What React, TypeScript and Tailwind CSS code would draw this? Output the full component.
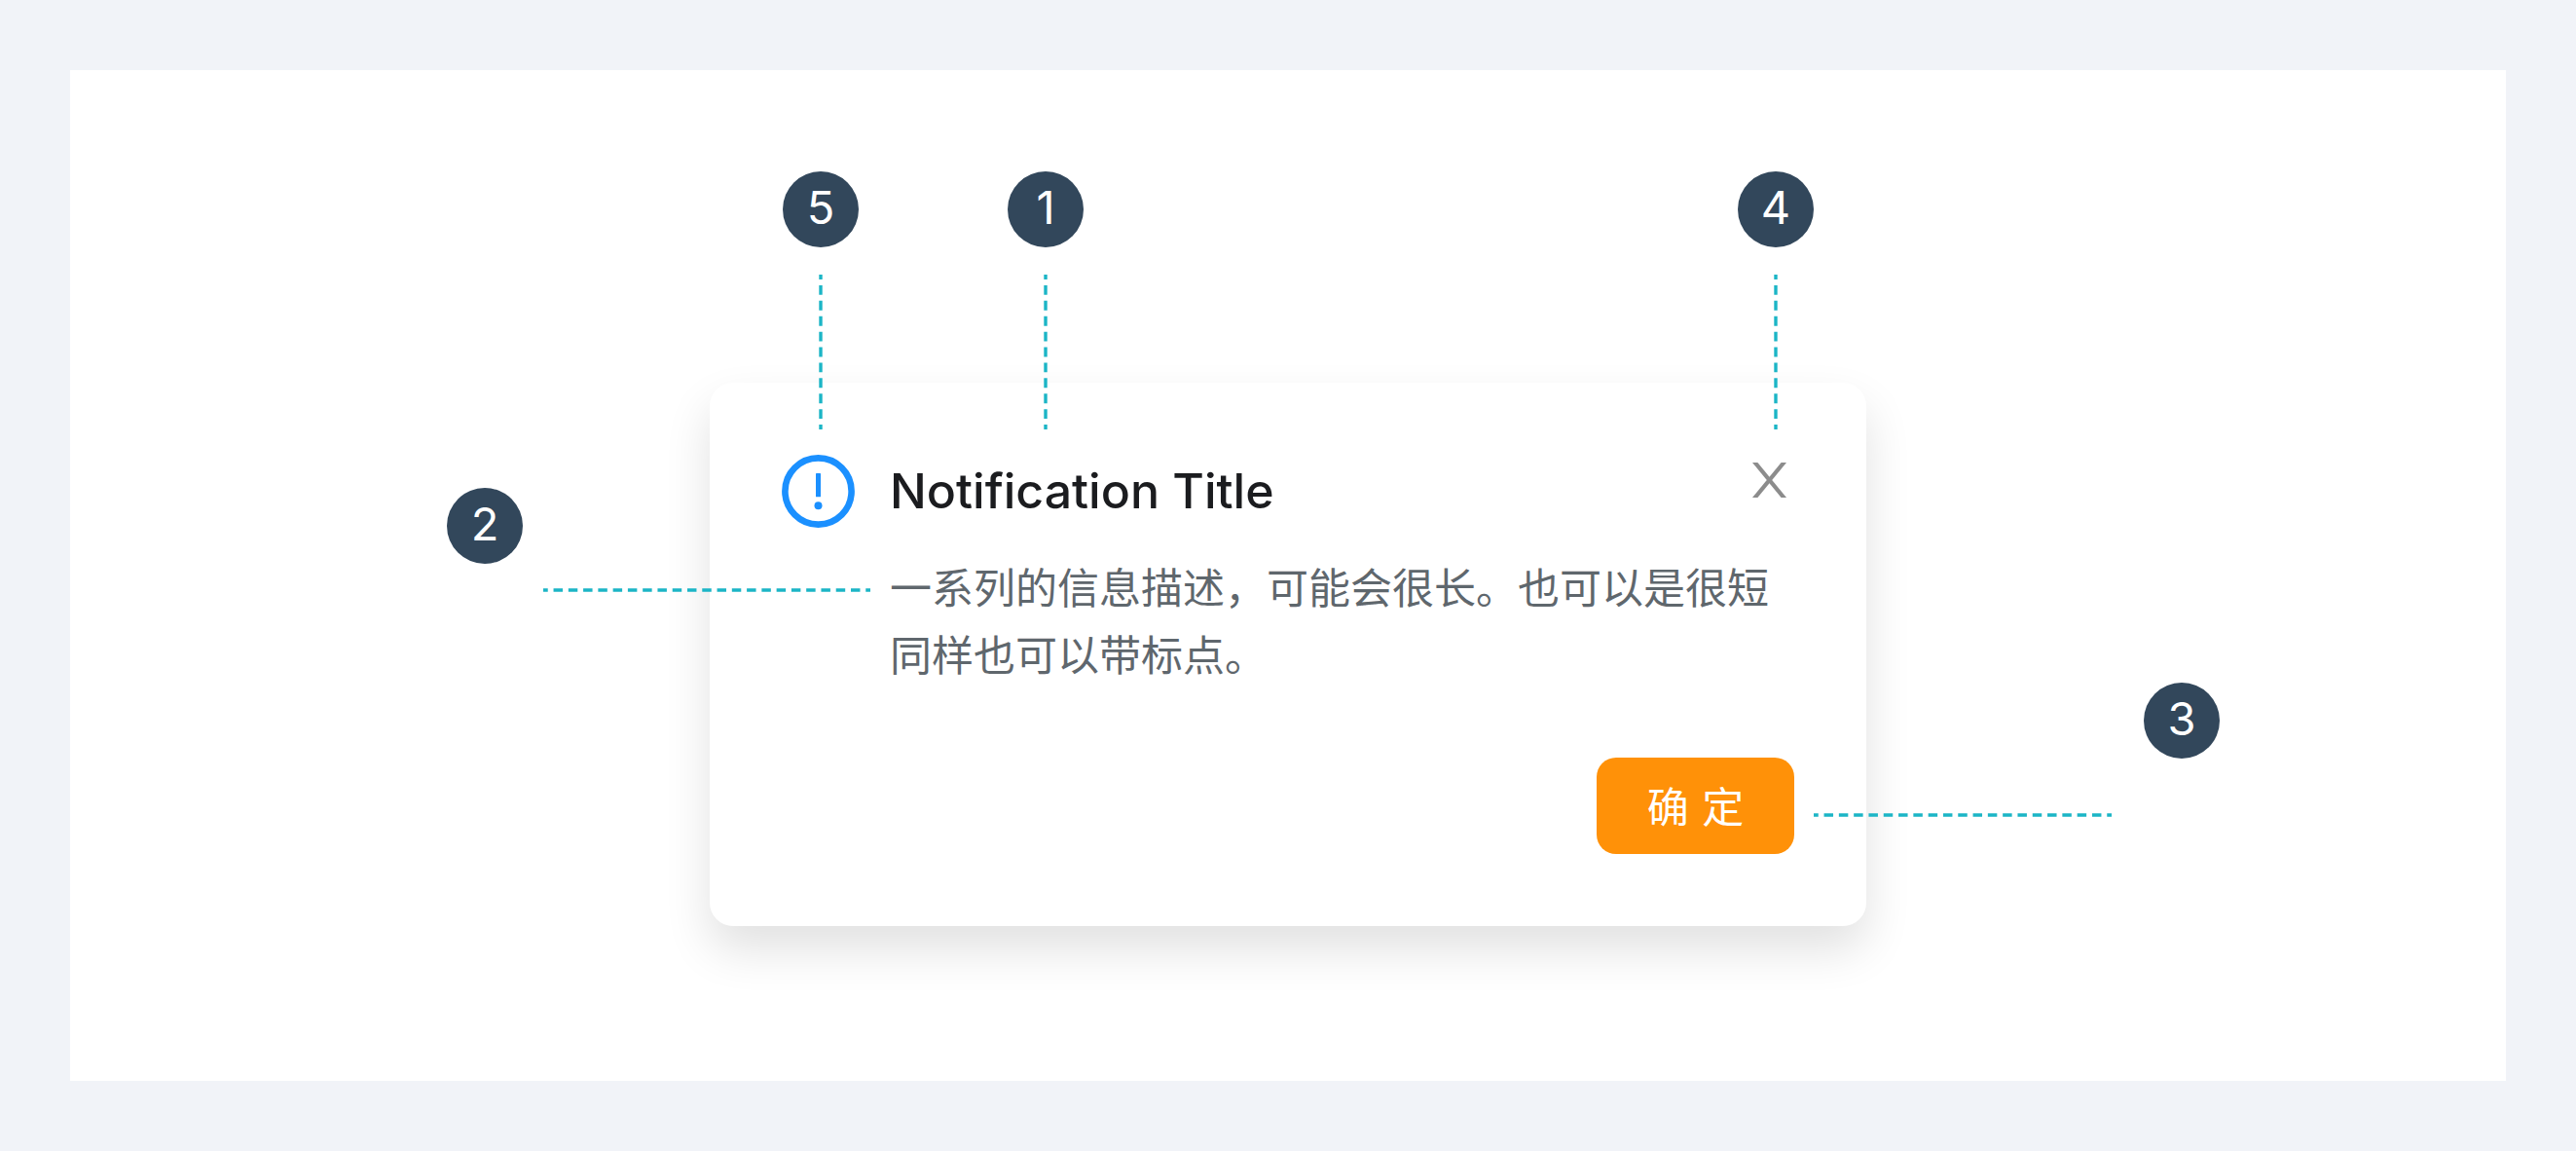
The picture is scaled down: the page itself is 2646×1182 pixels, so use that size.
import React from "react";

function Badge({ label }: { label: string }) {
  return (
    <span className="flex size-[78px] shrink-0 items-center justify-center rounded-full bg-[#32475b] pb-1 font-['Inter',sans-serif] text-[47px] leading-[48px] text-white">
      {label}
    </span>
  );
}

type LeaderProps = { length: number; dashes: number; vertical?: boolean };

/* Dashed leader that starts and ends on half a dash. */
function Leader({ length, dashes, vertical = false }: LeaderProps) {
  const width = vertical ? 4 : length;
  const height = vertical ? length : 4;
  return (
    <svg aria-hidden="true" width={width} height={height} viewBox={`0 0 ${width} ${height}`} className="block shrink-0">
      <line
        x1={vertical ? 2 : 0}
        y1={vertical ? 0 : 2}
        x2={vertical ? 2 : length}
        y2={vertical ? length : 2}
        stroke="#1bb5c6"
        strokeWidth="3.4"
        pathLength={dashes * 100}
        strokeDasharray="62 38"
        strokeDashoffset="31"
      />
    </svg>
  );
}

function TopCallout({ label }: { label: string }) {
  return (
    <div className="flex flex-col items-center gap-7">
      <Badge label={label} />
      <Leader vertical length={159} dashes={10} />
    </div>
  );
}

function InfoIcon() {
  return (
    <svg aria-hidden="true" viewBox="0 0 75 75" className="size-[75px] shrink-0">
      <circle cx="37.5" cy="37.5" r="34.1" fill="none" stroke="#1b90ff" strokeWidth="6.6" />
      <rect x="35" y="19" width="5" height="24.3" rx="0.6" fill="#1b90ff" />
      <circle cx="37.5" cy="52.3" r="4" fill="#1b90ff" />
    </svg>
  );
}

function CloseIcon() {
  return (
    <svg aria-hidden="true" viewBox="0 0 35 36" className="h-9 w-[35px]">
      <path d="M0 0H5.4L35 36H29.6Z" fill="#8c8c8c" />
      <path d="M35 0H29.6L0 36H5.4Z" fill="#8c8c8c" />
    </svg>
  );
}

function NotificationCard() {
  return (
    <section
      aria-labelledby="notification-title"
      className="col-start-2 row-start-2 flex gap-9 rounded-3xl bg-white p-[74px] shadow-[0_24px_48px_rgba(0,0,0,0.12)]"
    >
      <InfoIcon />
      <div className="flex min-w-0 flex-1 flex-col">
        <header className="flex min-h-[75px] items-start justify-between">
          <h1
            id="notification-title"
            className="font-['Inter',sans-serif] text-[50px] leading-[74px] font-medium text-[#1b1c1f]"
          >
            Notification Title
          </h1>
          <button type="button" aria-label="Close" className="cursor-pointer p-2">
            <CloseIcon />
          </button>
        </header>
        <p className="mt-[25px] font-['Noto_Sans_CJK_SC',sans-serif] text-[43px] leading-[69px] text-[#5f676d]">
          一系列的信息描述，可能会很长。也可以是很短同样也可以带标点。
        </p>
        <button
          type="button"
          className="mt-[73px] flex h-[99px] w-[203px] cursor-pointer items-center justify-center self-end rounded-[20px] bg-[#ff9108] pt-1 font-['DejaVu_Sans','Noto_Sans_CJK_SC',sans-serif] text-[43px] leading-[60px] text-white"
        >
          确 定
        </button>
      </div>
    </section>
  );
}

export default function App() {
  return (
    <div lang="zh-CN" className="min-h-screen bg-[#f1f3f8] p-[72px]">
      <main className="grid grid-cols-[minmax(0,1fr)_minmax(0,1188px)_minmax(0,1fr)] bg-white pt-[104px] pb-[159px]">
        <NotificationCard />

        <div className="pointer-events-none z-10 col-start-2 row-start-1 -mb-12 flex pr-[54px] pl-[75px]">
          <div className="flex gap-[153px]">
            <TopCallout label="5" />
            <TopCallout label="1" />
          </div>
          <div className="ml-auto">
            <TopCallout label="4" />
          </div>
        </div>

        <div className="pointer-events-none z-10 col-start-1 row-start-2 -mr-[165px] flex flex-col items-end gap-[25px] pt-[108px]">
          <div className="flex w-[435px]">
            <Badge label="2" />
          </div>
          <Leader length={336} dashes={22} />
        </div>

        <div className="pointer-events-none z-10 col-start-3 row-start-2 -ml-[54px] flex flex-col items-start gap-14 pt-[308px]">
          <div className="flex w-[417px] justify-end">
            <Badge label="3" />
          </div>
          <Leader length={306} dashes={20} />
        </div>
      </main>
    </div>
  );
}
